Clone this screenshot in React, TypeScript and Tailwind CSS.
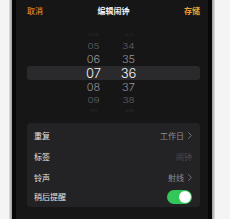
import React from "react";

const cjk = { fontFamily: '"Noto Sans CJK SC", "Noto Sans", sans-serif' };
const num = { fontFamily: 'Inter, "Noto Sans", sans-serif' };

type Row = { h: string; a: string; b: string; cls: string; bg?: boolean };

const rows: Row[] = [
  { h: "h-[12px]", a: "04", b: "33", cls: "text-[8px] text-[#2e2e30] scale-y-50" },
  { h: "h-[12px]", a: "05", b: "34", cls: "text-[10px] text-[#646467] scale-y-75" },
  { h: "h-[14px]", a: "06", b: "35", cls: "text-[11px] text-[#96969a] scale-y-90" },
  { h: "h-[14px]", a: "07", b: "36", cls: "text-[13px] text-[#f4f4f4]", bg: true },
  { h: "h-[14px]", a: "08", b: "37", cls: "text-[11px] text-[#96969a] scale-y-90" },
  { h: "h-[11px]", a: "09", b: "38", cls: "text-[10px] text-[#646467] scale-y-75" },
  { h: "h-[10px]", a: "10", b: "39", cls: "text-[8px] text-[#2e2e30] scale-y-50" },
];

function Chevron() {
  return (
    <svg width="4" height="7" viewBox="0 0 4 7" className="ml-[4px]">
      <path d="M0.6 0.6 L3.3 3.5 L0.6 6.4" fill="none" stroke="#7c7c80" strokeWidth="0.9" strokeLinecap="round" strokeLinejoin="round" />
    </svg>
  );
}

export default function App() {
  return (
    <div className="w-[230px] h-[219px] flex bg-[#f6f6f6] overflow-hidden">
      <div className="w-[9px] h-full bg-[#f4f4f4]" />
      <div className="w-[3px] h-full bg-gradient-to-r from-[#e2e2e2] to-[#9a9a9a]" />
      <div className="w-[4px] h-full bg-[#070707]" />
      <div className="w-[192px] h-full bg-[#161617] pl-[11px] pr-[8px] flex flex-col">
        <div className="h-[21px] flex items-center justify-between text-[8px] leading-none" style={cjk}>
          <span className="text-[#f0a030]">取消</span>
          <span className="text-[#f2f2f2] font-bold">编辑闹钟</span>
          <span className="text-[#f0a030] font-bold">存储</span>
        </div>
        <div className="mt-[7px] flex flex-col font-light" style={num}>
          {rows.map((r, i) => (
            <div
              key={i}
              className={`${r.h} flex items-center pl-[56px] gap-[14px] ${r.bg ? "bg-[#2a2a2d] rounded-[3px]" : ""}`}
            >
              <span className={`w-[21px] text-center leading-none ${r.cls}`}>{r.a}</span>
              <span className={`w-[21px] text-center leading-none ${r.cls}`}>{r.b}</span>
            </div>
          ))}
        </div>
        <div className="mt-[8px] bg-[#232325] rounded-[4px] pt-[2px] pl-[7px] pr-[8px] flex flex-col text-[8px] leading-none" style={cjk}>
          <div className="h-[21px] flex items-center justify-between">
            <span className="text-[#e6e6e6]">重复</span>
            <span className="flex items-center text-[#8e8e92]">工作日<Chevron /></span>
          </div>
          <div className="h-[21px] flex items-center justify-between">
            <span className="text-[#e6e6e6]">标签</span>
            <span className="text-[#4e4e52]">闹钟</span>
          </div>
          <div className="h-[21px] flex items-center justify-between">
            <span className="text-[#e6e6e6]">铃声</span>
            <span className="flex items-center text-[#8e8e92]">射线<Chevron /></span>
          </div>
          <div className="h-[19px] flex items-center justify-between pb-[1px]">
            <span className="text-[#e6e6e6]">稍后提醒</span>
            <span className="w-[25px] h-[14px] rounded-full bg-[#33c759] flex items-center justify-end pr-[1px]">
              <span className="w-[12px] h-[12px] rounded-full bg-white" />
            </span>
          </div>
        </div>
      </div>
      <div className="w-[4px] h-full bg-[#070707]" />
      <div className="w-[3px] h-full bg-gradient-to-r from-[#9a9a9a] to-[#e2e2e2]" />
      <div className="flex-1 h-full bg-[#f4f4f4]" />
    </div>
  );
}
